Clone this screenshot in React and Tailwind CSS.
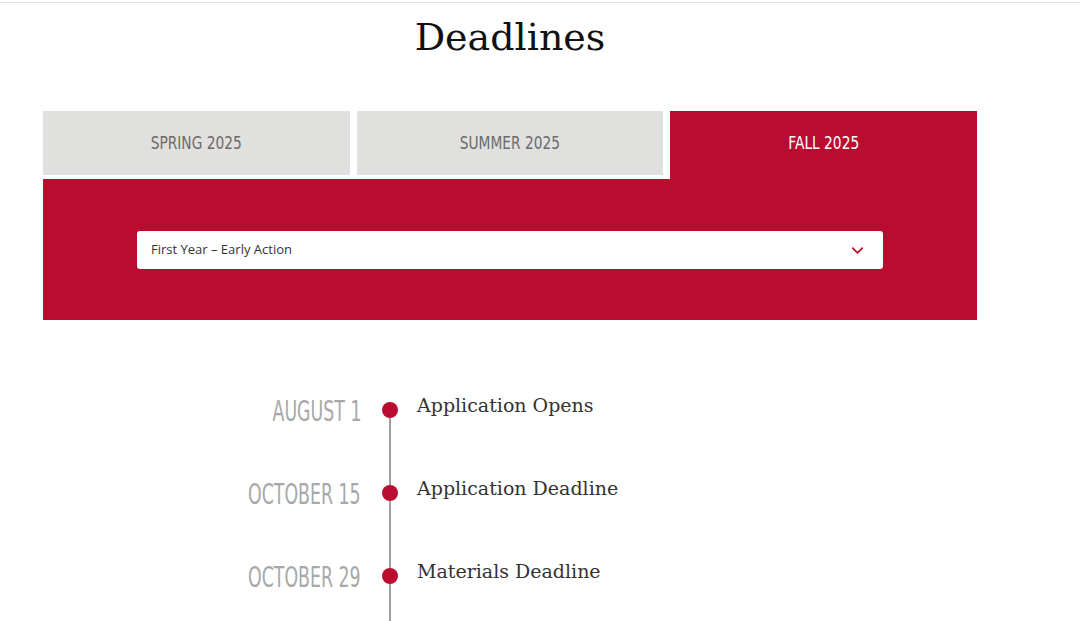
import React, { useState } from 'react';
import { ChevronDown } from 'lucide-react';

const terms = ['SPRING 2025', 'SUMMER 2025', 'FALL 2025'];

const deadlines = [
  { date: 'AUGUST 1', label: 'Application Opens' },
  { date: 'OCTOBER 15', label: 'Application Deadline' },
  { date: 'OCTOBER 29', label: 'Materials Deadline' },
];

const sans = { fontFamily: '"DejaVu Sans", sans-serif' };
const serif = { fontFamily: '"DejaVu Serif", serif' };

export default function App() {
  const [activeTerm, setActiveTerm] = useState(2);

  return (
    <main className="min-h-screen bg-white">
      <div className="h-[2px]" />
      <div className="border-t border-[#e2e2e2]" />
      <div className="ml-[43px] w-[934px]">
        <h1 className="pt-[8px] text-center text-[38px] leading-[52px] text-[#111]" style={serif}>
          Deadlines
        </h1>

        <div className="mt-[48px] flex gap-[7px]">
          {terms.map((term, i) => (
            <button
              key={term}
              type="button"
              onClick={() => setActiveTerm(i)}
              className={`flex flex-1 items-center justify-center text-[17px] ${
                i === activeTerm
                  ? 'h-[68px] bg-[#ba0c2f] pb-[4px] text-white'
                  : 'mb-[4px] h-[64px] bg-[#e0e0de] text-[#6b6b6b]'
              }`}
              style={sans}
            >
              <span className="inline-block origin-center scale-x-[0.81] pt-[2px]">{term}</span>
            </button>
          ))}
        </div>

        <section className="h-[141px] bg-[#ba0c2f] px-[94px] pt-[52px]">
          <div
            className="flex h-[38px] items-center justify-between rounded-[3px] bg-white pl-[14px] pr-[16px] text-[13px] text-[#333]"
            style={{ fontFamily: '"Open Sans", sans-serif' }}
          >
            <span>First Year – Early Action</span>
            <ChevronDown size={19} strokeWidth={2.2} className="text-[#ba0c2f]" />
          </div>
        </section>
      </div>

      <div className="mt-[72px]">
        {deadlines.map((item, i) => (
          <div key={item.date} className="flex h-[83px]">
            <div
              className="w-[361px] pt-[5px] text-right text-[28px] leading-[30px] text-[#a8a8a8]"
              style={sans}
            >
              <span className="inline-block origin-right scale-x-[0.62]">{item.date}</span>
            </div>
            <div className="ml-[21px] flex w-[16px] flex-col items-center">
              <div className={`h-[10px] w-[2px] ${i === 0 ? 'bg-transparent' : 'bg-[#a0a0a0]'}`} />
              <div className="h-[16px] w-[16px] rounded-full bg-[#ba0c2f]" />
              <div className="w-[2px] flex-1 bg-[#a0a0a0]" />
            </div>
            <div className="ml-[19px] text-[19px] leading-[26px] text-[#333]" style={serif}>
              {item.label}
            </div>
          </div>
        ))}
      </div>
    </main>
  );
}
